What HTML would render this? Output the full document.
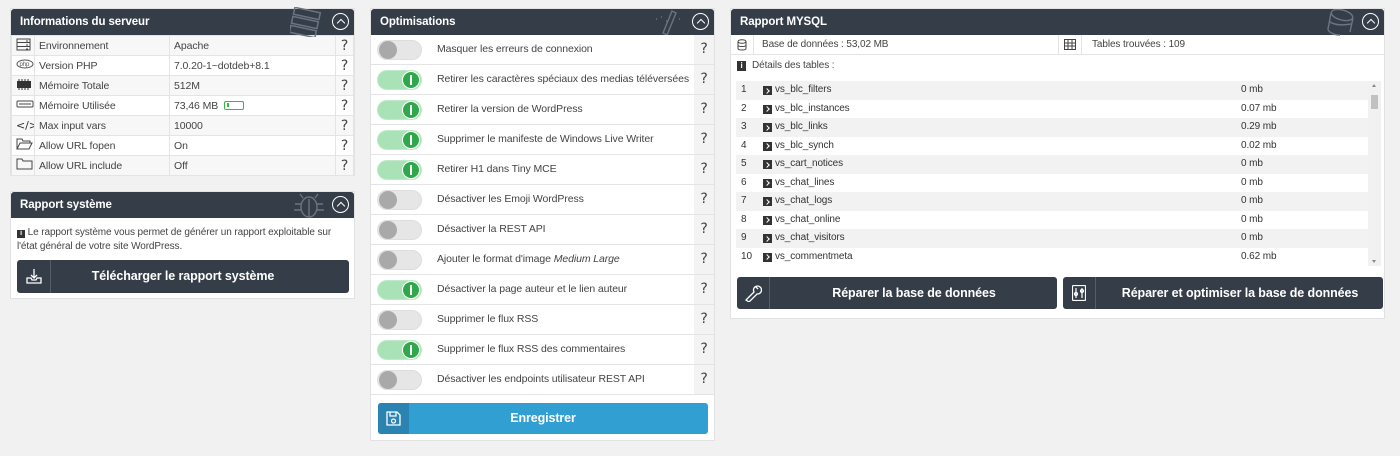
<!DOCTYPE html>
<html><head><meta charset="utf-8"><style>
*{box-sizing:border-box;margin:0;padding:0}
body{width:1400px;height:456px;background:#f1f1f1;font-family:"Liberation Sans",sans-serif;font-size:10.5px;color:#444;position:relative;overflow:hidden;letter-spacing:-0.1px}
.p{position:absolute;background:#fff;border:1px solid #e2e2e2}
.h{height:26px;background:#353e48;color:#fff;font-weight:bold;font-size:11.5px;line-height:26px;padding-left:9px;position:relative;border-radius:3px 3px 0 0}
.ch{position:absolute;right:5px;top:4px;width:17px;height:17px;border:1.5px solid #fff;border-radius:50%}
.ch:after{content:"";position:absolute;left:4.5px;top:6px;width:5px;height:5px;border-left:1.5px solid #fff;border-top:1.5px solid #fff;transform:rotate(45deg)}
.q{font-family:"DejaVu Sans",sans-serif;font-size:14px;color:#444;text-align:center;font-weight:normal}
table{border-collapse:collapse;width:100%;table-layout:fixed}
.t1 td{border:1px solid #e4e4e4;height:20px;padding:0 4px;white-space:nowrap;overflow:hidden}
.t1 tr:nth-child(odd) td{background:#f7f7f7}
.row{height:30px;border-bottom:1px solid #e4e4e4;position:relative;line-height:29px;white-space:nowrap}
.row .l{position:absolute;left:66px}
.row .hq{position:absolute;right:0;top:0;width:20px;height:29px;background:#f3f3f3;line-height:29px}
.tg{position:absolute;left:6px;top:5px;width:45px;height:20px;border-radius:10px;background:#e6e6e6;border:1px solid #ddd}
.tg i{position:absolute;left:1px;top:0px;width:18px;height:18px;border-radius:50%;background:#a9a9a9}
.tg.on{background:#a9e2b6;border-color:#bfe9c8}
.tg.on i{left:auto;right:1px;background:#2ea84a;border:1px solid #fff}
.tg.on i:after{content:"";position:absolute;left:7px;top:3px;width:2px;height:10px;background:#fff}
.btn{position:absolute;background:#353e48;color:#fff;font-weight:bold;font-size:12.5px;border-radius:3px;text-align:center}
.btn .ic{position:absolute;left:0;top:0;bottom:0;width:34px;border-right:1px solid #555e68}
.tr{height:18.5px;line-height:18.5px;position:relative;font-size:10px;color:#333}
.tr:nth-child(odd){background:#f2f2f2}
.tr .n{position:absolute;left:5px}
.tr .a{position:absolute;left:27px;top:5px;width:9px;height:9px;background:#333}
.tr .a:after{content:"";position:absolute;left:2px;top:2.5px;width:3px;height:3px;border-right:1.2px solid #fff;border-top:1.2px solid #fff;transform:rotate(45deg)}
.tr .nm{position:absolute;left:39px}
.tr .s{position:absolute;left:505px}
</style></head><body>

<div class="p" style="left:10px;top:8px;width:345px;height:168px">
<div class="h">Informations du serveur<svg style="position:absolute;right:30px;top:-2px" width="34" height="30" viewBox="0 0 34 30" fill="none" stroke="#6b7480" stroke-width="1.5"><rect x="4" y="3" width="26" height="7" transform="rotate(12 17 6)"/><rect x="2" y="12" width="26" height="7" transform="rotate(12 15 15)"/><rect x="0" y="21" width="26" height="7" transform="rotate(12 13 24)"/></svg><span class="ch"></span></div>
<table class="t1">
<colgroup><col style="width:23px"><col style="width:135px"><col><col style="width:18px"></colgroup>
<tr><td><svg width="15" height="13" viewBox="0 0 15 13" fill="none" stroke="#444"><rect x="1" y="1" width="13" height="11"/><path d="M1 4.5h13M1 8.5h13M10 3h2M10 7h2M10 11h2"/></svg></td><td>Environnement</td><td>Apache</td><td class="q">?</td></tr>
<tr><td><svg width="18" height="10"><ellipse cx="9" cy="5" rx="8" ry="4" fill="none" stroke="#555"/><text x="3.5" y="7" font-size="6" fill="#555" font-family="Liberation Sans">php</text></svg></td><td>Version PHP</td><td>7.0.20-1~dotdeb+8.1</td><td class="q">?</td></tr>
<tr><td><svg width="16" height="13"><rect x="1" y="3" width="14" height="7" fill="#333"/><path d="M3 1v2M6 1v2M9 1v2M12 1v2M3 10v2M6 10v2M9 10v2M12 10v2" stroke="#333"/></svg></td><td>Mémoire Totale</td><td>512M</td><td class="q">?</td></tr>
<tr><td><svg width="18" height="10"><rect x="1" y="2" width="16" height="6" rx="1" fill="none" stroke="#444"/><path d="M4 4v2M6 4v2M8 4v2M10 4v2M12 4v2M14 4v2" stroke="#444"/></svg></td><td>Mémoire Utilisée</td><td>73,46 MB <span style="display:inline-block;width:20px;height:9px;border:1px solid #3ab54a;border-radius:2px;vertical-align:-1px;margin-left:3px;position:relative"><span style="position:absolute;left:2px;top:1.5px;width:2px;height:4px;background:#3ab54a"></span></span></td><td class="q">?</td></tr>
<tr><td style="font-family:'DejaVu Sans';font-size:11px;color:#333">&lt;/&gt;</td><td>Max input vars</td><td>10000</td><td class="q">?</td></tr>
<tr><td><svg width="17" height="12" fill="none" stroke="#444"><path d="M1 11V1h5l1 2h7v2M1 11l3-6h12l-3 6z"/></svg></td><td>Allow URL fopen</td><td>On</td><td class="q">?</td></tr>
<tr><td><svg width="17" height="12" fill="none" stroke="#444"><path d="M1 11V1h5l1 2h9v8z"/></svg></td><td>Allow URL include</td><td>Off</td><td class="q">?</td></tr>
</table></div>

<div class="p" style="left:10px;top:191px;width:345px;height:108px">
<div class="h">Rapport système<svg style="position:absolute;right:28px;top:0" width="34" height="27" fill="none" stroke="#6b7480" stroke-width="1.4"><ellipse cx="17" cy="15" rx="8" ry="10"/><path d="M17 7v18M9 12H3M9 18H2M25 12h6M25 18h7M11 6l-3-4M23 6l3-4"/></svg><span class="ch"></span></div>
<div style="padding:8px 6px 0;line-height:14px;font-size:10px;color:#444"><span style="display:inline-block;width:8px;height:8px;background:#333;color:#fff;font-size:7px;line-height:8px;text-align:center;font-weight:bold">i</span> Le rapport système vous permet de générer un rapport exploitable sur l'état général de votre site WordPress.</div>
<div class="btn" style="left:6px;top:68px;width:332px;height:33px;line-height:33px"><span class="ic"><svg style="margin-top:8px" width="16" height="16" fill="none" stroke="#fff" stroke-width="1.3"><path d="M8 1v9M5 7l3 3 3-3M1 10v5h14v-5h-4l-1 2H6l-1-2z"/></svg></span>Télécharger le rapport système</div>
</div>

<div class="p" style="left:370px;top:8px;width:345px;height:433px">
<div class="h">Optimisations<svg style="position:absolute;right:28px;top:0" width="34" height="26" fill="none" stroke="#6b7480" stroke-width="1.4"><path d="M20 2l4 2-9 22-4-2zM4 10h1M9 8h1M14 12h1M27 10h1"/></svg><span class="ch"></span></div>
<div class="row"><span class="tg"><i></i></span><span class="l">Masquer les erreurs de connexion</span><span class="hq q">?</span></div>
<div class="row"><span class="tg on"><i></i></span><span class="l">Retirer les caractères spéciaux des medias téléversées</span><span class="hq q">?</span></div>
<div class="row"><span class="tg on"><i></i></span><span class="l">Retirer la version de WordPress</span><span class="hq q">?</span></div>
<div class="row"><span class="tg on"><i></i></span><span class="l">Supprimer le manifeste de Windows Live Writer</span><span class="hq q">?</span></div>
<div class="row"><span class="tg on"><i></i></span><span class="l">Retirer H1 dans Tiny MCE</span><span class="hq q">?</span></div>
<div class="row"><span class="tg"><i></i></span><span class="l">Désactiver les Emoji WordPress</span><span class="hq q">?</span></div>
<div class="row"><span class="tg"><i></i></span><span class="l">Désactiver la REST API</span><span class="hq q">?</span></div>
<div class="row"><span class="tg"><i></i></span><span class="l">Ajouter le format d'image <i>Medium Large</i></span><span class="hq q">?</span></div>
<div class="row"><span class="tg on"><i></i></span><span class="l">Désactiver la page auteur et le lien auteur</span><span class="hq q">?</span></div>
<div class="row"><span class="tg"><i></i></span><span class="l">Supprimer le flux RSS</span><span class="hq q">?</span></div>
<div class="row"><span class="tg on"><i></i></span><span class="l">Supprimer le flux RSS des commentaires</span><span class="hq q">?</span></div>
<div class="row"><span class="tg"><i></i></span><span class="l">Désactiver les endpoints utilisateur REST API</span><span class="hq q">?</span></div>
<div class="btn" style="left:7px;top:394px;width:330px;height:31px;line-height:31px;background:#319fd2"><span class="ic" style="width:31px;background:#2a83b0;border:none;border-radius:3px 0 0 3px"><svg style="margin-top:8px" width="15" height="15" fill="none" stroke="#fff" stroke-width="1.3"><path d="M1 1h10l3 3v10H1zM4 1v4h6V1"/><circle cx="7.5" cy="10" r="2"/></svg></span>Enregistrer</div>
</div>

<div class="p" style="left:730px;top:8px;width:655px;height:311px">
<div class="h">Rapport MYSQL<svg style="position:absolute;right:28px;top:0" width="32" height="27" fill="none" stroke="#6b7480" stroke-width="1.4"><ellipse cx="18" cy="6" rx="11" ry="5" transform="rotate(15 18 6)"/><path d="M7 4l-3 16c0 3 6 6 12 6M29 9l-3 14M5 12c3 3 10 5 22 3"/></svg><span class="ch"></span></div>
<div style="height:20px;border-bottom:1px solid #e4e4e4;position:relative;line-height:20px;font-size:10px;color:#444">
<span style="position:absolute;left:0;top:0;width:23px;height:20px;border-right:1px solid #e4e4e4;text-align:center"><svg style="margin-top:4px" width="10" height="12" fill="none" stroke="#444"><ellipse cx="5" cy="2.5" rx="4" ry="1.8"/><path d="M1 2.5v7c0 2 8 2 8 0v-7M1 6c0 2 8 2 8 0"/></svg></span>
<span style="position:absolute;left:31px">Base de données : 53,02 MB</span>
<span style="position:absolute;left:327px;top:0;width:24px;height:20px;border-left:1px solid #e4e4e4;border-right:1px solid #e4e4e4;text-align:center"><svg style="margin-top:4px" width="12" height="11" fill="none" stroke="#444"><rect x=".5" y=".5" width="11" height="10"/><path d="M.5 4h11M.5 7h11M4 .5v10M8 .5v10"/></svg></span>
<span style="position:absolute;left:361px">Tables trouvées : 109</span></div>
<div style="height:22px;line-height:22px;font-size:10px;padding-left:6px;color:#444"><span style="display:inline-block;width:9px;height:10px;background:#333;color:#fff;font-size:8px;line-height:10px;text-align:center;font-weight:bold;margin-right:6px">i</span>Détails des tables :</div>
<div style="position:absolute;left:5px;top:72px;width:645px;height:185px;overflow:hidden">
<div style="width:632px">
<div class="tr"><span class="n">1</span><span class="a"></span><span class="nm">vs_blc_filters</span><span class="s">0 mb</span></div>
<div class="tr"><span class="n">2</span><span class="a"></span><span class="nm">vs_blc_instances</span><span class="s">0.07 mb</span></div>
<div class="tr"><span class="n">3</span><span class="a"></span><span class="nm">vs_blc_links</span><span class="s">0.29 mb</span></div>
<div class="tr"><span class="n">4</span><span class="a"></span><span class="nm">vs_blc_synch</span><span class="s">0.02 mb</span></div>
<div class="tr"><span class="n">5</span><span class="a"></span><span class="nm">vs_cart_notices</span><span class="s">0 mb</span></div>
<div class="tr"><span class="n">6</span><span class="a"></span><span class="nm">vs_chat_lines</span><span class="s">0 mb</span></div>
<div class="tr"><span class="n">7</span><span class="a"></span><span class="nm">vs_chat_logs</span><span class="s">0 mb</span></div>
<div class="tr"><span class="n">8</span><span class="a"></span><span class="nm">vs_chat_online</span><span class="s">0 mb</span></div>
<div class="tr"><span class="n">9</span><span class="a"></span><span class="nm">vs_chat_visitors</span><span class="s">0 mb</span></div>
<div class="tr"><span class="n">10</span><span class="a"></span><span class="nm">vs_commentmeta</span><span class="s">0.62 mb</span></div>
</div>
<div style="position:absolute;right:0;top:0;width:13px;height:185px;background:#f1f1f1"><div style="position:absolute;left:3px;top:14px;width:7px;height:14px;background:#c1c1c1"></div><div style="position:absolute;left:4px;top:3px;border:2.5px solid transparent;border-bottom:3px solid #888;border-top:0"></div><div style="position:absolute;left:4px;bottom:3px;border:2.5px solid transparent;border-top:3px solid #888;border-bottom:0"></div></div>
</div>
<div class="btn" style="left:6px;top:268px;width:320px;height:32px;line-height:32px"><span class="ic" style="width:33px"><svg style="margin-top:7px" width="18" height="18" fill="none" stroke="#fff" stroke-width="1.3"><path d="M2 16l8-8a4 4 0 1 1 3 2l-8 8zM12 3l2 2"/></svg></span><span style="padding-left:34px">Réparer la base de données</span></div>
<div class="btn" style="left:332px;top:268px;width:320px;height:32px;line-height:32px"><span class="ic" style="width:33px"><svg style="margin-top:8px" width="14" height="16" fill="none" stroke="#fff" stroke-width="1.2"><rect x=".5" y=".5" width="13" height="15" rx="1"/><path d="M4 3v10M10 3v10"/><circle cx="4" cy="9" r="1.5"/><circle cx="10" cy="6" r="1.5"/></svg></span><span style="padding-left:34px">Réparer et optimiser la base de données</span></div>
</div>
</body></html>
